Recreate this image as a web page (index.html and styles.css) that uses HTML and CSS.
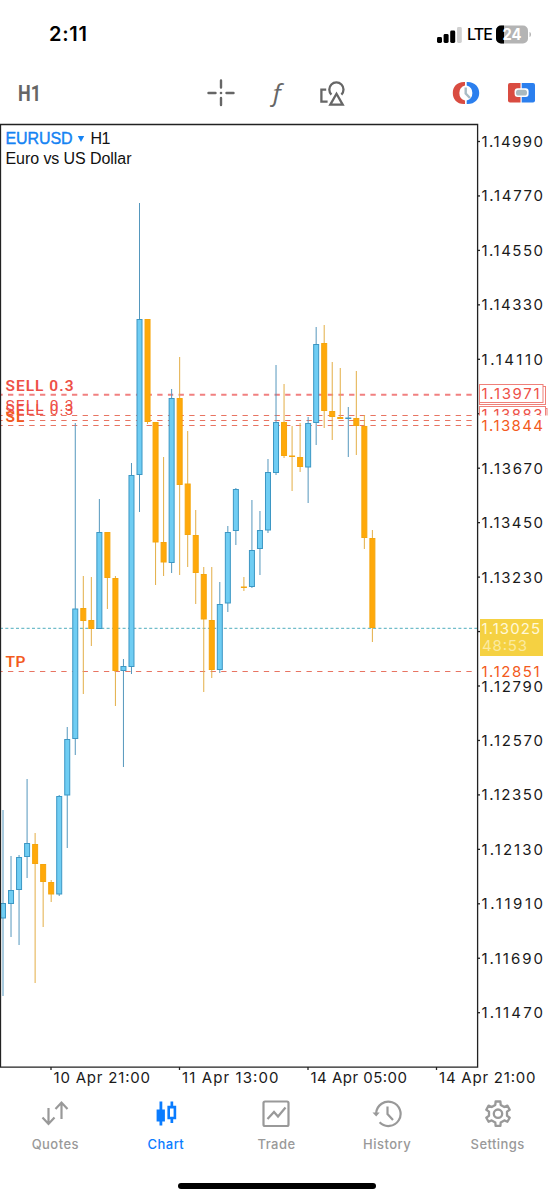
FILE: index.html
```html
<!DOCTYPE html>
<html lang="en">
<head>
    <meta charset="UTF-8">
    <meta name="viewport" content="width=device-width, initial-scale=1.0">
    <title>EURUSD Chart</title>
    <link rel="stylesheet" href="styles.css">
</head>
<body>

<div class="screen">
    <div class="statusBar">
        <div class="time">2:11</div>
        <div class="status">
            <svg class="signal" width="26" height="17" viewBox="0 0 26 17">
                <rect x="0" y="11" width="5" height="6" rx="1.4"/>
                <rect x="6.6" y="8" width="5" height="9" rx="1.4"/>
                <rect x="13.2" y="4.5" width="5" height="12.5" rx="1.4"/>
                <rect class="off" x="20" y="1" width="4.8" height="16" rx="1.4"/>
            </svg>
            <span class="network">LTE</span>
            <svg class="battery" width="36" height="19" viewBox="0 0 36 19">
                <rect x="0" y="0.5" width="32" height="18" rx="5" fill="#b4b4b4"/>
                <path d="M8 0.5H5a5 5 0 0 0-5 5v8a5 5 0 0 0 5 5h3z" fill="#000"/>
                <path d="M33.5 7c2 .6 2 4.400 0 5z" fill="#b4b4b4"/>
                <text x="6.500" y="15" textLength="19" lengthAdjust="spacingAndGlyphs">24</text>
            </svg>
        </div>
    </div>

    <div class="toolbar">
        <svg class="timeframe" width="26" height="28" viewBox="0 0 26 28">
            <text x="1" y="22" textLength="23" lengthAdjust="spacingAndGlyphs">H1</text>
        </svg>
        <div class="tools">
            <svg width="28" height="28" viewBox="0 0 28 28">
                <path d="M14 1.500v7M14 19v7M1.500 14h7M19.500 14h7" stroke="#666" stroke-width="2.400" stroke-linecap="round"/>
                <circle cx="14" cy="14" r="1.300" fill="#666"/>
            </svg>
            <svg width="28" height="28" viewBox="0 0 28 28">
                <text class="function" x="7" y="21.500">ƒ</text>
            </svg>
            <svg width="28" height="28" viewBox="0 0 28 28" fill="none" stroke="#666" stroke-width="2.300">
                <path d="M7.200 10.600H2.400v12h6.200"/>
                <path d="M12.400 15.600a7.100 7.100 0 1 1 10 0"/>
                <path d="M17.500 14.800l6.200 10.800H11.300z"/>
            </svg>
        </div>
        <div class="trading">
            <svg width="28" height="24" viewBox="0 0 28 24">
                <path d="M13 1h-1C4.500 1 .8 6 .8 12s3.700 11 11.200 11h1v-3.500a7.800 7.800 0 0 1 0-15z" fill="#d94c41"/>
                <path d="M14.700 1h1C23 1 27.200 6 27.200 12S23 23 15.700 23h-1v-3.500a7.800 7.800 0 0 0 0-15z" fill="#2b7fee"/>
                <path d="M13.700 6.500v6l4.300 4.500" fill="none" stroke="#a9bcc5" stroke-width="2.400"/>
            </svg>
            <svg width="28" height="24" viewBox="0 0 28 24">
                <path d="M13.500 2H3a2 2 0 0 0-2 2v15.500a2 2 0 0 0 2 2h10.500z" fill="#d94c41"/>
                <path d="M14.700 2H26a2 2 0 0 1 2 2v15.500a2 2 0 0 1-2 2H14.700z" fill="#2b7fee"/>
                <rect x="7.600" y="7.300" width="14" height="8.800" rx="3" fill="#fff"/>
                <rect x="9" y="8.800" width="11" height="5.800" rx="2.600" fill="#a9b9bf"/>
            </svg>
        </div>
    </div>

    <div class="chartArea">
        <svg id="chart" width="554" height="970" viewBox="0 120 554 970"></svg>
    </div>

    <nav class="tabs">
        <a class="tab">
            <svg width="30" height="30" viewBox="0 0 30 30" fill="none" stroke="currentColor" stroke-width="2.200">
                <path d="M8.500 9v16M2.500 18.500l6 6.500 6-6.500M21.500 20V4M15.500 10l6-6.500 6 6.500"/>
            </svg>
            <span>Quotes</span>
        </a>
        <a class="tab active">
            <svg width="30" height="30" viewBox="0 0 30 30" fill="currentColor">
                <path d="M8.500 2.500h2.800v8h2.600v12h-2.600v4H8.500v-4H5.600v-12h2.900z"/>
                <path d="M19.500 2.500h2.700v4.300h3v13.400h-3v3.800h-2.700v-3.800h-3.100V6.800h3.100zM19 9.600v8.200h3.600V9.600z" fill-rule="evenodd"/>
            </svg>
            <span>Chart</span>
        </a>
        <a class="tab">
            <svg width="30" height="30" viewBox="0 0 30 30" fill="none" stroke="currentColor" stroke-width="2.200">
                <rect x="2.500" y="2.500" width="25" height="24.500" rx="1.500"/>
                <path d="M6.500 20l6.500-7 4 4.500 7.500-9"/>
            </svg>
            <span>Trade</span>
        </a>
        <a class="tab">
            <svg width="30" height="30" viewBox="0 0 30 30" fill="none" stroke="currentColor" stroke-width="2.200">
                <path d="M4.200 14a12.200 12.200 0 1 1 3.400 9.300"/>
                <path d="M.5 13.500h7.200l-3.500 4z" fill="currentColor" stroke="none"/>
                <path d="M15.500 7.500v7.500l5.500 6"/>
            </svg>
            <span>History</span>
        </a>
        <a class="tab">
            <svg width="30" height="30" viewBox="0 0 30 30" fill="none" stroke="currentColor" stroke-width="2.300">
                <path id="gear" stroke-linejoin="round"/>
                <circle cx="15" cy="14.700" r="4.200"/>
            </svg>
            <span>Settings</span>
        </a>
    </nav>
    <div class="homeBar"></div>
</div>

<script src="chart.js"></script>
</body>
</html>
```
FILE: styles.css
```css
body {
    margin: 0;
    background: #fff;
    font-family: Inter, "Liberation Sans", sans-serif;
}
.screen {
    width: 554px;
    height: 1200px;
    overflow: hidden;
    display: flex;
    flex-direction: column;
}
.statusBar {
    height: 66px;
    box-sizing: border-box;
    padding: 2px 22px 0 49px;
    display: flex;
    align-items: center;
    justify-content: space-between;
}
.time {
    font-size: 20px;
    font-weight: 600;
    letter-spacing: 0.7px;
}
.status {
    display: flex;
    align-items: center;
    gap: 4px;
}
.signal .off {
    fill: #d0d0d0;
}
.network {
    font-size: 16px;
    font-weight: 500;
    letter-spacing: -0.9px;
    width: 25px;
}
.battery text {
    font-size: 15.5px;
    font-weight: 700;
    fill: #fff;
}
.toolbar {
    height: 54px;
    padding: 0 19px 0 17px;
    display: flex;
    align-items: center;
}
.toolbar svg {
    overflow: visible;
}
.timeframe text {
    font-family: Roboto, sans-serif;
    font-size: 22.5px;
    font-weight: 700;
    fill: #666;
}
.tools {
    display: flex;
    gap: 28px;
    margin-left: 164px;
}
.function {
    font-family: "Open Sans", sans-serif;
    font-size: 26px;
    font-style: italic;
    font-weight: 500;
    fill: #666;
}
.trading {
    display: flex;
    gap: 27px;
    margin-left: auto;
}
.chartArea {
    height: 970px;
}
#chart {
    display: block;
}
#chart .axis {
    stroke: #222;
    stroke-width: 1.3;
    fill: none;
}
#chart .label {
    font-size: 15px;
    fill: #1a1a1a;
}
#chart .title {
    font-family: "Liberation Sans", sans-serif;
    font-size: 16px;
    fill: #111;
}
#chart .symbol {
    fill: #1583f3;
    stroke: #1583f3;
    stroke-width: 0.4;
}
#chart .up {
    fill: #6fcdf3;
    stroke: #3c97c4;
}
#chart .down {
    fill: #ffa90a;
    stroke: #f5a50d;
}
#chart .upWick {
    stroke: #5597bd;
}
#chart .downWick {
    stroke: #e3ae46;
}
#chart .order {
    stroke: #e87462;
    stroke-width: 1;
    stroke-dasharray: 5.33 5.33;
    stroke-dashoffset: 2.67;
}
#chart .pair {
    stroke: #f18080;
    stroke-width: 2;
}
#chart .bid {
    stroke: #71bdca;
    stroke-width: 1.2;
    stroke-dasharray: 3 2.33;
}
#chart .tag {
    font-family: Roboto, sans-serif;
    font-size: 15.5px;
}
#chart .sell {
    fill: #ee5047;
}
#chart .stop {
    fill: #f35a20;
}
#chart .bold {
    font-weight: 600;
}
#chart .box {
    fill: #fff;
    stroke: #ef8079;
}
#chart .mask {
    fill: #fff;
}
#chart .bidBox {
    fill: #f5d142;
}
#chart .bidText {
    fill: #fff8d8;
}
#chart .timer {
    fill: #fbeaa0;
}
.tabs {
    height: 78px;
    display: flex;
    margin-right: 1px;
}
.tab {
    flex: 1;
    display: flex;
    flex-direction: column;
    align-items: center;
    padding-top: 9px;
    color: #999;
    font-size: 13px;
    font-weight: 500;
    letter-spacing: 0.45px;
}
.tab span {
    margin-top: 7px;
    line-height: 16px;
}
.active {
    color: #0a7cff;
}
.homeBar {
    width: 198px;
    height: 6px;
    margin: 15px auto 0;
    border-radius: 3px;
    background: #000;
}
```
FILE: chart.js
```js
// direction, high, body top, body bottom, low
const candles = [
    ['up', 810, 903, 918.5, 996], ['up', 856, 890, 904, 937], ['up', 855, 857, 890, 945],
    ['up', 779, 843, 857, 878], ['down', 833, 844, 864, 983], ['down', 864, 864, 882, 927],
    ['down', 880, 882, 894.5, 902], ['up', 795, 796, 894.5, 896], ['up', 727, 739, 795.5, 848],
    ['up', 423, 608.5, 739, 755], ['down', 576, 608, 621, 694], ['down', 577, 620, 629, 646],
    ['up', 499, 532, 629, 629], ['down', 532, 532, 578, 609], ['down', 576, 578, 671, 706],
    ['up', 659, 666, 671, 767], ['up', 463, 475, 667, 674], ['up', 203, 319, 475, 512],
    ['down', 319, 319, 422, 424], ['down', 422, 422, 542.5, 585], ['down', 457, 542, 562.5, 576],
    ['up', 389, 398, 563, 573], ['down', 357, 398, 485, 575], ['down', 431, 483.5, 535, 567],
    ['down', 510, 535, 573, 604], ['down', 567, 574, 619.5, 692], ['down', 567, 620, 670, 678],
    ['up', 582, 604, 670, 673], ['up', 526, 532, 603.5, 612], ['up', 488, 489, 531, 545],
    ['down', 577, 586.5, 588, 591], ['up', 500, 550, 587, 588], ['up', 511, 530, 549, 575],
    ['up', 459, 472, 530.5, 533], ['up', 365, 422, 473, 475], ['down', 384, 422, 456, 458],
    ['down', 426, 455.5, 457, 491], ['down', 423, 457, 467, 472], ['up', 417, 423, 467.5, 503],
    ['up', 327, 344, 423, 445], ['down', 325, 343, 411, 428], ['down', 362, 411, 417, 440],
    ['down', 368, 417, 419, 419], ['up', 407, 417.5, 419, 457], ['down', 371, 418, 426, 455],
    ['down', 415, 426, 538, 549], ['down', 530, 538, 628, 642]
];

let svg = '';

function line(x1, y1, x2, y2, cls) {
    svg += `<line class="${cls}" x1="${x1}" y1="${y1}" x2="${x2}" y2="${y2}"/>`;
}
function rect(x, y, w, h, cls) {
    svg += `<rect class="${cls}" x="${x}" y="${y}" width="${w}" height="${h}"/>`;
}
function text(value, x, y, width, cls) {
    svg += `<text class="${cls}" x="${x}" y="${y}" textLength="${width}">${value}</text>`;
}

// order levels
line(0, 394.7, 477, 394.7, 'order pair');
[415.5, 420.5, 425.5, 671.5].forEach(y => line(0, y, 477, y, 'order'));
line(0, 628.3, 477, 628.3, 'bid');

candles.forEach(([dir, high, top, bottom, low], i) => {
    const x = 3 + i * 8.03;
    line(x, high, x, low, dir + 'Wick');
    rect(x - 2.5, top + 0.5, 5, Math.max(bottom - top - 1, 0.5), dir);
});

text('SELL 0.3', 5.5, 390.7, 68, 'tag sell bold');
text('SELL 0.3', 5.5, 411, 68, 'tag sell');
text('SELL 0.3', 5.5, 414.5, 68, 'tag sell');
text('SL', 5.5, 421.5, 19, 'tag stop bold');
text('TP', 5.5, 667, 20, 'tag stop bold');

// frame
line(0.5, 124, 0.5, 1067, 'axis');
svg += '<path class="axis" d="M0 124.500H477.600V1067.200H0"/>';

// price scale
for (let i = 0; i < 17; i++) {
    const y = 141.5 + i * 54.45;
    line(477, y, 480, y, 'axis');
    if (i !== 5 && i !== 9) {
        text((1.1499 - i * 0.0022).toFixed(5), 481.5, y + 5.5, 61.5, 'label');
    }
}

rect(479.5, 408.5, 67.5, 18, 'box');
rect(479.5, 406.5, 66, 18, 'box');
text('1.13883', 481.5, 420, 61, 'label sell');
rect(479, 415.5, 74, 18, 'mask');
text('1.13844', 481.5, 430.7, 61.5, 'label stop');
rect(479.5, 386.5, 66, 18, 'box');
rect(479.5, 384.5, 63.5, 18, 'box');
text('1.13971', 481.5, 399.3, 58, 'label sell');

rect(480, 619, 63, 37, 'bidBox');
text('1.13025', 481.5, 633.5, 58.5, 'label bidText');
text('48:53', 482, 651, 45, 'label timer');
text('1.12851', 481.5, 676.5, 58, 'label stop');

// time scale
[['10 Apr 21:00', 51], ['11 Apr 13:00', 179.5], ['14 Apr 05:00', 308], ['14 Apr 21:00', 436.5]].forEach(([value, x]) => {
    line(x, 1067, x, 1070, 'axis');
    text(value, x + 2.5, 1083, 96.5, 'label');
});

text('EURUSD', 5.5, 143.5, 67, 'title symbol');
svg += '<path fill="#1583f3" d="M77.800 136h6.400l-3.200 6z"/>';
text('H1', 90.5, 143.5, 20, 'title');
text('Euro vs US Dollar', 5.5, 163.5, 126, 'title');

document.getElementById('chart').innerHTML = svg;

// settings gear, 6 teeth
let points = [];
for (let i = 0; i < 6; i++) {
    [[-17, 9.2], [-11, 12.4], [11, 12.4], [17, 9.2]].forEach(([offset, r]) => {
        const a = (i * 60 - 90 + offset) * Math.PI / 180;
        points.push((15 + r * Math.cos(a)).toFixed(1) + ' ' + (14.7 + r * Math.sin(a)).toFixed(1));
    });
}
document.getElementById('gear').setAttribute('d', 'M' + points.join('L') + 'Z');
```
